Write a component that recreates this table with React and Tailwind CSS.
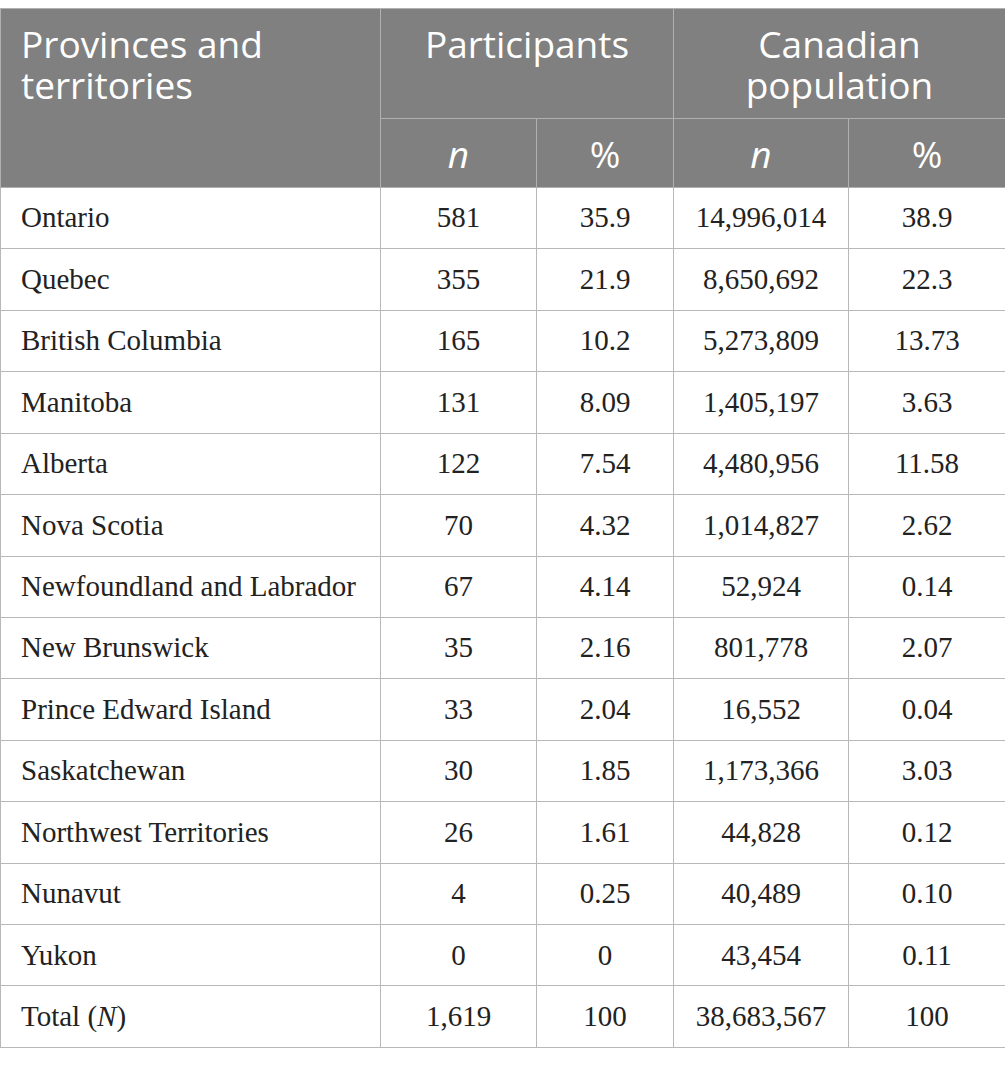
import React from "react";

const rows = [
  ["Ontario", "581", "35.9", "14,996,014", "38.9"],
  ["Quebec", "355", "21.9", "8,650,692", "22.3"],
  ["British Columbia", "165", "10.2", "5,273,809", "13.73"],
  ["Manitoba", "131", "8.09", "1,405,197", "3.63"],
  ["Alberta", "122", "7.54", "4,480,956", "11.58"],
  ["Nova Scotia", "70", "4.32", "1,014,827", "2.62"],
  ["Newfoundland and Labrador", "67", "4.14", "52,924", "0.14"],
  ["New Brunswick", "35", "2.16", "801,778", "2.07"],
  ["Prince Edward Island", "33", "2.04", "16,552", "0.04"],
  ["Saskatchewan", "30", "1.85", "1,173,366", "3.03"],
  ["Northwest Territories", "26", "1.61", "44,828", "0.12"],
  ["Nunavut", "4", "0.25", "40,489", "0.10"],
  ["Yukon", "0", "0", "43,454", "0.11"],
];

const hd = "border border-[#b0b0b0] bg-[#808080] text-white font-['Open_Sans',sans-serif] text-[37px] leading-[41px] font-normal";
const td = "border border-[#b8b8b8] font-['Liberation_Serif',serif] text-[29px] text-[#222] text-center align-middle";

export default function App() {
  return (
    <div className="bg-white w-[1005px] h-[1065px] pt-[8px]">
      <table className="table-fixed border-collapse w-[1005px]">
        <colgroup>
          <col className="w-[380px]" />
          <col className="w-[156px]" />
          <col className="w-[137px]" />
          <col className="w-[175px]" />
          <col className="w-[157px]" />
        </colgroup>
        <thead>
          <tr className="h-[110px]">
            <th rowSpan={2} className={`${hd} text-left align-top pl-[20px] pt-[14px]`}>
              Provinces and territories
            </th>
            <th colSpan={2} className={`${hd} text-center align-top pt-[14px]`}>
              Participants
            </th>
            <th colSpan={2} className={`${hd} text-center align-top pt-[14px] px-[40px]`}>
              Canadian population
            </th>
          </tr>
          <tr className="h-[69px]">
            <th className={`${hd} text-center italic align-middle`}>n</th>
            <th className={`${hd} text-center align-middle`}>%</th>
            <th className={`${hd} text-center italic align-middle`}>n</th>
            <th className={`${hd} text-center align-middle`}>%</th>
          </tr>
        </thead>
        <tbody>
          {rows.map((r) => (
            <tr key={r[0]} className="h-[61.43px]">
              <td className={`${td} !text-left pl-[20px]`}>{r[0]}</td>
              <td className={td}>{r[1]}</td>
              <td className={td}>{r[2]}</td>
              <td className={td}>{r[3]}</td>
              <td className={td}>{r[4]}</td>
            </tr>
          ))}
          <tr className="h-[61.43px]">
            <td className={`${td} !text-left pl-[20px]`}>
              Total (<span className="italic">N</span>)
            </td>
            <td className={td}>1,619</td>
            <td className={td}>100</td>
            <td className={td}>38,683,567</td>
            <td className={td}>100</td>
          </tr>
        </tbody>
      </table>
    </div>
  );
}
